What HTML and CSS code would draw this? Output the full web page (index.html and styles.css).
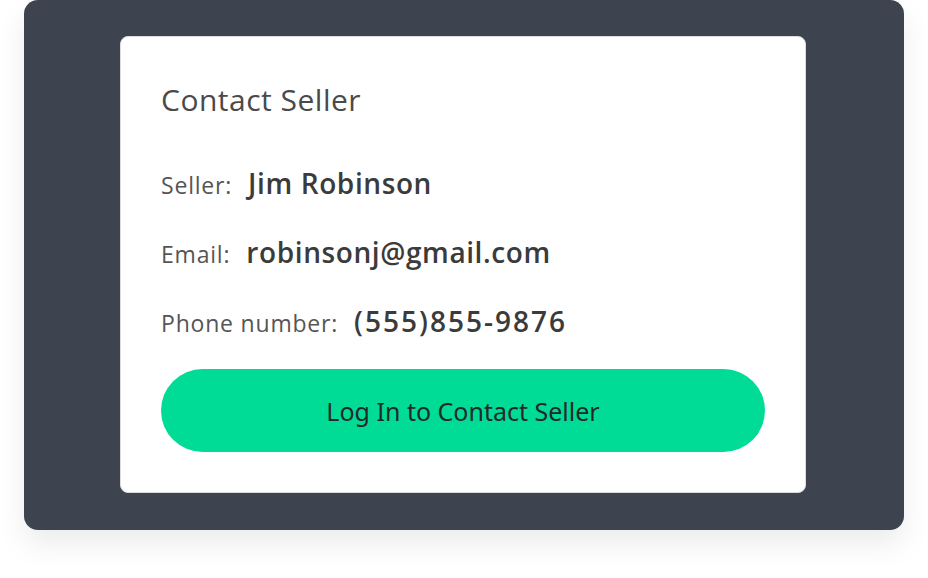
FILE: index.html
```html
<!DOCTYPE html>
<html lang="en">
<head>
  <meta charset="UTF-8">
  <title>Contact Seller</title>
  <meta name="viewport" content="width=device-width, initial-scale=1.0">
  <link rel="stylesheet" href="styles.css">
</head>
<body>
  <div class="panel">
    <div class="card">
      <h2 class="card-title">Contact Seller</h2>

      <div class="field">
        <span class="field-label">Seller:</span>
        <span class="field-value">Jim Robinson</span>
      </div>
      <div class="field">
        <span class="field-label">Email:</span>
        <span class="field-value">robinsonj@gmail.com</span>
      </div>
      <div class="field">
        <span class="field-label">Phone number:</span>
        <span class="field-value phone">(555)855-9876</span>
      </div>

      <button class="login-button">Log In to Contact Seller</button>
    </div>
  </div>
</body>
</html>
```

FILE: styles.css
```css
body {
  margin: 0;
  padding: 0 24px 48px;
  background: #fff;
  font-family: "Open Sans", Lato, sans-serif;
}

.panel {
  width: 880px;
  box-sizing: border-box;
  padding: 36px 98px 37px 96px;
  background: #3e4350;
  border-radius: 14px;
  box-shadow: 0 14px 30px rgba(0, 0, 0, 0.08);
}

.card {
  background: #fff;
  border: 1px solid #dcdcdc;
  border-radius: 8px;
  padding: 40px;
}

.card-title {
  margin: 0 0 40px;
  font-size: 30px;
  font-weight: 400;
  letter-spacing: 0.5px;
  line-height: 46px;
  color: #4a4a4a;
}

.field {
  display: flex;
  align-items: baseline;
  gap: 16px;
  height: 69px;
  line-height: 40px;
}

.field-label {
  font-size: 23px;
  letter-spacing: 0.8px;
  color: #555;
}

.field-value {
  font-size: 28px;
  font-weight: 600;
  letter-spacing: 0.6px;
  color: #3b3b3b;
}

/* digits run wide */
.field-value.phone {
  letter-spacing: 2px;
}

.login-button {
  display: block;
  width: 100%;
  height: 83px;
  margin-top: -1px;
  border: none;
  border-radius: 42px;
  background: #00dc95;
  color: #22292b;
  font-family: "Noto Sans", sans-serif;
  font-size: 25px;
  cursor: pointer;
}
```
